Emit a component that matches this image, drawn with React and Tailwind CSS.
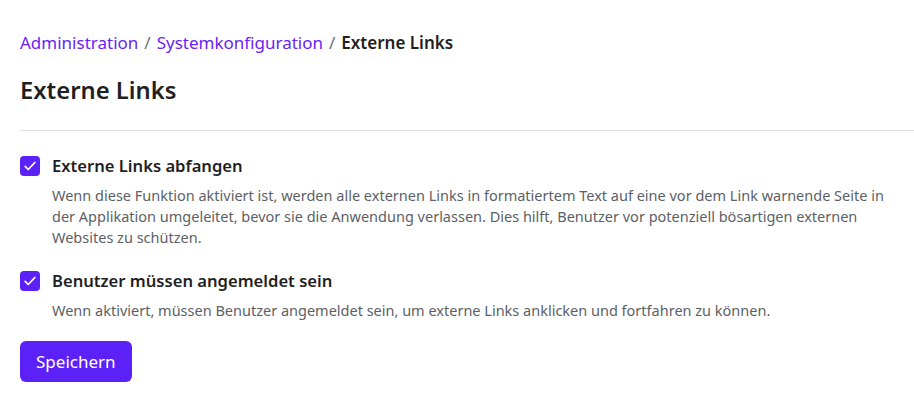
import { useState } from "react";

const font = { fontFamily: '"Noto Sans", "Open Sans", sans-serif' };

function Check({ checked, onChange }) {
  return (
    <button
      type="button"
      onClick={onChange}
      className={`mt-[1px] w-5 h-5 shrink-0 rounded-[4px] flex items-center justify-center ${checked ? "bg-[#5b21f6]" : "bg-white border border-gray-400"}`}
    >
      {checked && (
        <svg width="14" height="14" viewBox="0 0 16 16" fill="none">
          <path d="M2.5 8.5l3.5 3.5 7.5-8" stroke="white" strokeWidth="2" strokeLinecap="round" strokeLinejoin="round" />
        </svg>
      )}
    </button>
  );
}

function Option({ label, text, checked, onChange }) {
  return (
    <div className="flex gap-3">
      <Check checked={checked} onChange={onChange} />
      <div>
        <div className="text-[16.6px] leading-[22px] font-semibold text-[#1f1f23]">{label}</div>
        <p className="mt-[8px] text-[14.5px] leading-[21px] text-[#5c5f66]">{text}</p>
      </div>
    </div>
  );
}

export default function App() {
  const [intercept, setIntercept] = useState(true);
  const [mustLogin, setMustLogin] = useState(true);

  return (
    <div className="min-h-screen bg-white pl-5 pt-[31px]" style={font}>
      <nav className="text-[17px] leading-[24px] text-[#6b7280] flex gap-[6px]">
        <a className="text-[#6a22f5]">Administration</a>
        <span>/</span>
        <a className="text-[#6a22f5]">Systemkonfiguration</a>
        <span>/</span>
        <span className="font-semibold text-[#1f1f23]">Externe Links</span>
      </nav>
      <h1 className="mt-[20px] text-[23.8px] leading-[30px] font-semibold text-[#1f1f23]">Externe Links</h1>
      <div className="mt-[25px] h-px bg-[#e2e2e4]" />
      <div className="mt-[24px] pr-5 flex flex-col gap-[22px]">
        <Option
          label="Externe Links abfangen"
          checked={intercept}
          onChange={() => setIntercept(!intercept)}
          text="Wenn diese Funktion aktiviert ist, werden alle externen Links in formatiertem Text auf eine vor dem Link warnende Seite in der Applikation umgeleitet, bevor sie die Anwendung verlassen. Dies hilft, Benutzer vor potenziell bösartigen externen Websites zu schützen."
        />
        <Option
          label="Benutzer müssen angemeldet sein"
          checked={mustLogin}
          onChange={() => setMustLogin(!mustLogin)}
          text="Wenn aktiviert, müssen Benutzer angemeldet sein, um externe Links anklicken und fortfahren zu können."
        />
      </div>
      <button className="mt-[20px] h-[41px] px-4 rounded-md bg-[#5b21f6] text-white text-[17px]">Speichern</button>
    </div>
  );
}
